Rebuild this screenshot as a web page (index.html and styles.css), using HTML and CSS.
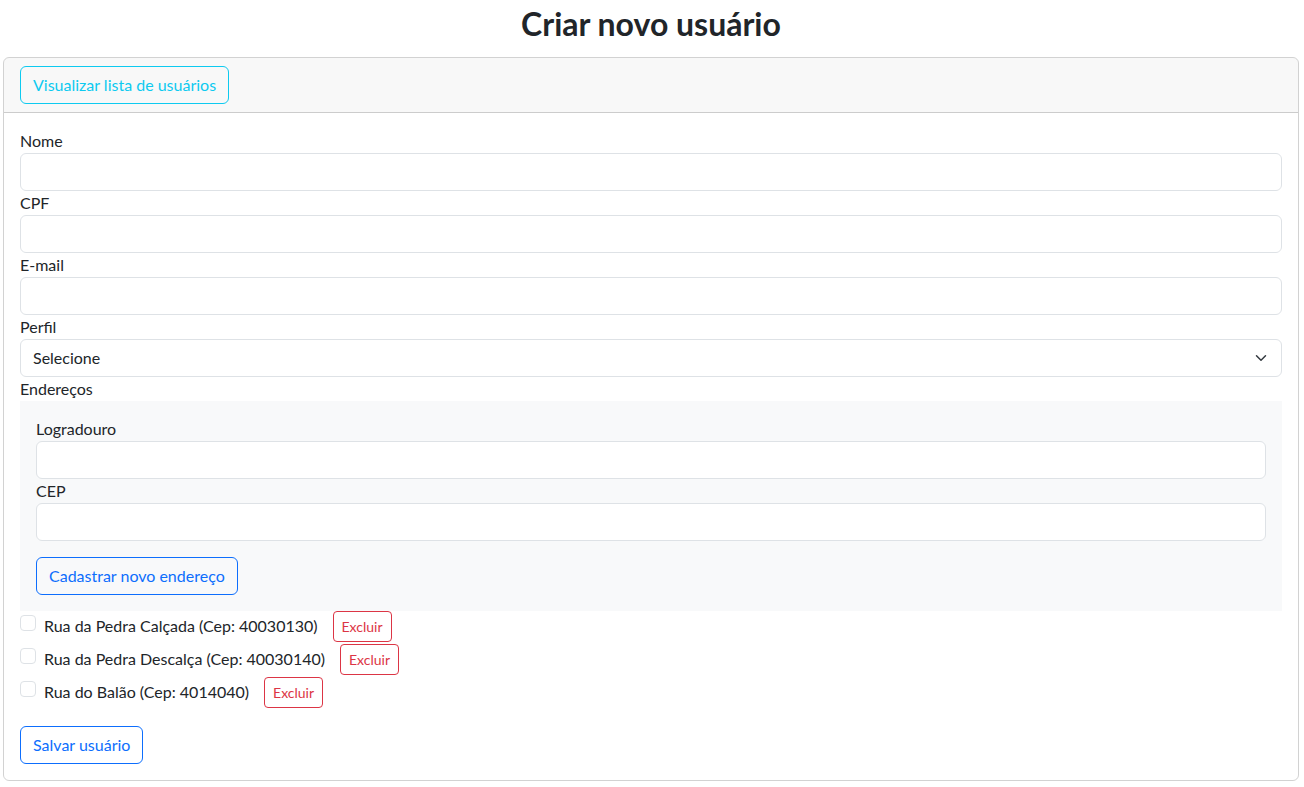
FILE: index.html
```html
<!DOCTYPE html>
<html lang="pt-BR">
<head>
<meta charset="utf-8">
<title>Criar novo usuário</title>
<link rel="stylesheet" href="styles.css">
</head>
<body>
<div class="page">
  <h2 class="title">Criar novo usuário</h2>
  <div class="card">
    <div class="card-header">
      <button class="btn btn-outline-info" type="button">Visualizar lista de usuários</button>
    </div>
    <form class="card-body">
      <label class="form-label" for="nome">Nome</label>
      <input class="form-control" id="nome" type="text">
      <label class="form-label" for="cpf">CPF</label>
      <input class="form-control" id="cpf" type="text">
      <label class="form-label" for="email">E-mail</label>
      <input class="form-control" id="email" type="email">
      <label class="form-label" for="perfil">Perfil</label>
      <div class="select-wrap">
        <select class="form-select" id="perfil">
          <option>Selecione</option>
        </select>
        <svg class="select-arrow" width="12" height="12" viewBox="0 0 16 16" aria-hidden="true"><path d="m2 5 6 6 6-6" fill="none" stroke="#343a40" stroke-width="2" stroke-linecap="round" stroke-linejoin="round"/></svg>
      </div>
      <span class="form-label">Endereços</span>
      <div class="address-box">
        <label class="form-label" for="logradouro">Logradouro</label>
        <input class="form-control" id="logradouro" type="text">
        <label class="form-label" for="cep">CEP</label>
        <input class="form-control" id="cep" type="text">
        <button class="btn btn-outline-primary add-btn" type="button">Cadastrar novo endereço</button>
      </div>
      <div class="address-list">
        <div class="form-check">
          <input class="form-check-input" type="checkbox" id="e1"><label class="form-check-label" for="e1">Rua da Pedra Calçada (Cep: 40030130)</label><button class="btn btn-sm btn-outline-danger" type="button">Excluir</button>
        </div>
        <div class="form-check">
          <input class="form-check-input" type="checkbox" id="e2"><label class="form-check-label" for="e2">Rua da Pedra Descalça (Cep: 40030140)</label><button class="btn btn-sm btn-outline-danger" type="button">Excluir</button>
        </div>
        <div class="form-check">
          <input class="form-check-input" type="checkbox" id="e3"><label class="form-check-label" for="e3">Rua do Balão (Cep: 4014040)</label><button class="btn btn-sm btn-outline-danger" type="button">Excluir</button>
        </div>
      </div>
      <button class="btn btn-outline-primary save-btn" type="button">Salvar usuário</button>
    </form>
  </div>
</div>
</body>
</html>
```
FILE: styles.css
```css
* { box-sizing: border-box; }

body {
  margin: 0;
  font-family: Lato, "Open Sans", sans-serif;
  font-size: 16px;
  line-height: 1.5;
  color: #212529;
  background: #fff;
}

.page {
  padding: 0 5px 0 3px;
}

.title {
  margin: 5px 0 14px;
  text-align: center;
  font-size: 32px;
  font-weight: 700;
  line-height: 38px;
}

.card {
  border: 1px solid rgba(0, 0, 0, 0.175);
  border-radius: 6px;
  overflow: hidden;
}

.card-header {
  padding: 8px 16px;
  background: rgba(33, 37, 41, 0.03);
  border-bottom: 1px solid rgba(0, 0, 0, 0.175);
}

.card-body {
  margin: 0;
  padding: 16px;
}

.btn {
  display: inline-block;
  padding: 6px 12px;
  font-family: inherit;
  font-size: 16px;
  line-height: 24px;
  background: transparent;
  border: 1px solid transparent;
  border-radius: 6px;
  cursor: pointer;
}

.btn-outline-info { color: #0dcaf0; border-color: #0dcaf0; }
.btn-outline-primary { color: #0d6efd; border-color: #0d6efd; }
.btn-outline-danger { color: #dc3545; border-color: #dc3545; }

.btn-sm {
  padding: 4px 8px;
  font-size: 14px;
  line-height: 21px;
  border-radius: 4px;
}

.form-label {
  display: block;
  line-height: 24px;
}

.form-control,
.form-select {
  display: block;
  width: 100%;
  height: 38px;
  padding: 6px 12px;
  font-family: inherit;
  font-size: 16px;
  line-height: 24px;
  color: #212529;
  background: #fff;
  border: 1px solid #dee2e6;
  border-radius: 6px;
  outline: none;
}

.select-wrap {
  position: relative;
}

.form-select {
  appearance: none;
  -webkit-appearance: none;
  padding-right: 36px;
}

.select-arrow {
  position: absolute;
  right: 15px;
  top: 13px;
  pointer-events: none;
}

.address-box {
  padding: 16px;
  background: #f8f9fa;
}

.add-btn {
  margin-top: 16px;
}

.form-check {
  min-height: 24px;
  padding-left: 24px;
  margin-bottom: 2px;
}

.form-check-input {
  float: left;
  margin: 4px 0 0 -24px;
  width: 16px;
  height: 16px;
  appearance: none;
  -webkit-appearance: none;
  background: #fff;
  border: 1px solid #dee2e6;
  border-radius: 4px;
}

.form-check-label {
  line-height: 24px;
}

.form-check .btn-sm {
  margin-left: 15px;
}

.save-btn {
  margin-top: 16px;
}
```
